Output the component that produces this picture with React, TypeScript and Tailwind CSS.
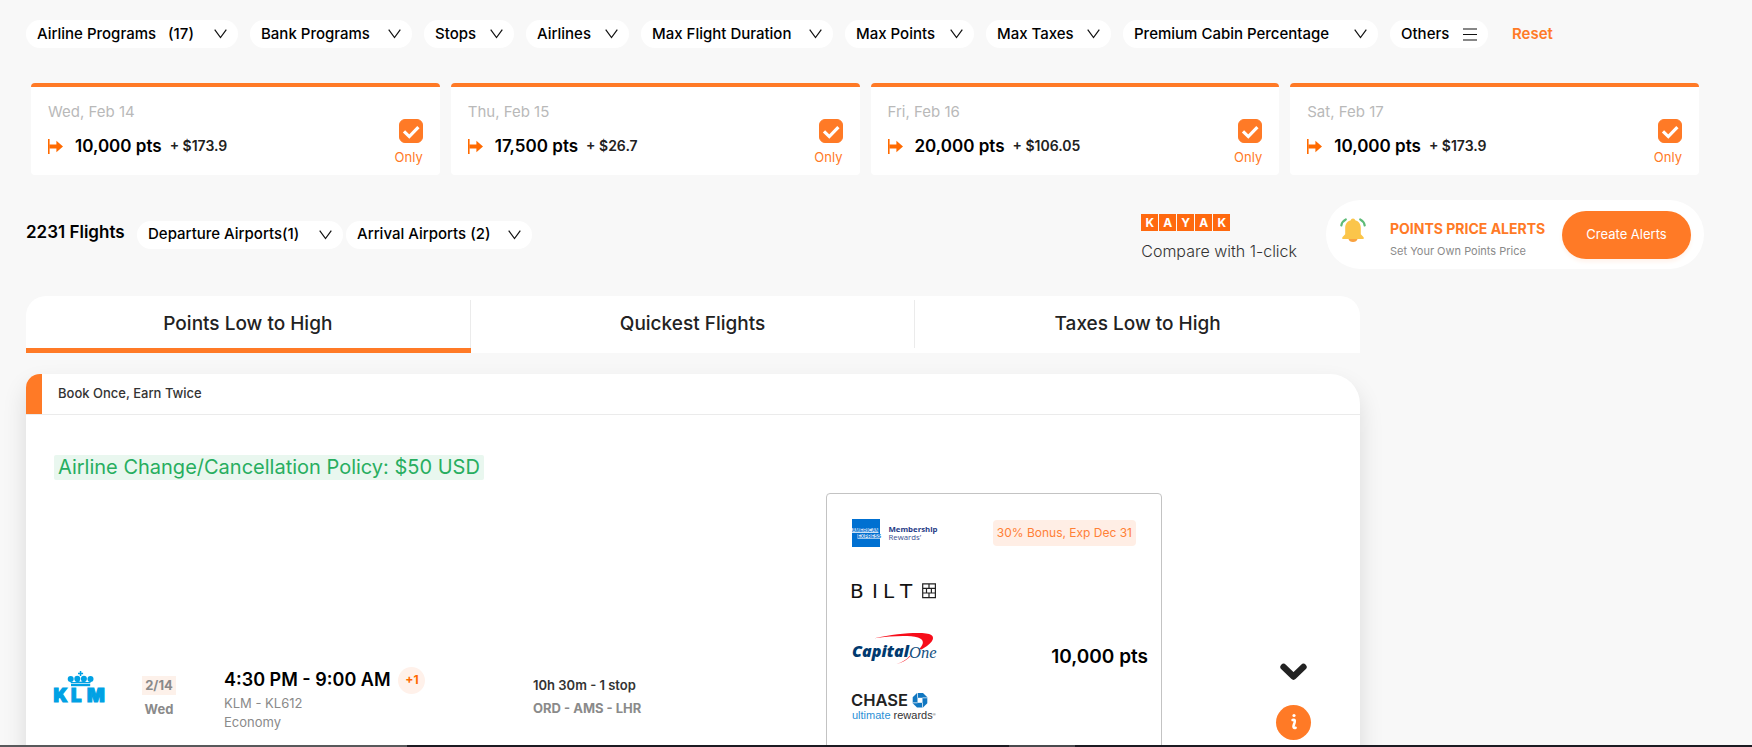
import React, { useState } from 'react';

const FILTERS = [
  { label: 'Airline Programs', count: '(17)', width: 'min-w-[212px]' },
  { label: 'Bank Programs', width: 'min-w-[162px]' },
  { label: 'Stops', width: 'min-w-[90px]' },
  { label: 'Airlines', width: 'min-w-[103px]' },
  { label: 'Max Flight Duration', width: 'min-w-[192px]' },
  { label: 'Max Points', width: 'min-w-[129px]' },
  { label: 'Max Taxes', width: 'min-w-[125px]' },
  { label: 'Premium Cabin Percentage', width: 'min-w-[255px]' },
];

const DAYS = [
  { date: 'Wed, Feb 14', points: '10,000 pts', tax: '+ $173.9' },
  { date: 'Thu, Feb 15', points: '17,500 pts', tax: '+ $26.7' },
  { date: 'Fri, Feb 16', points: '20,000 pts', tax: '+ $106.05' },
  { date: 'Sat, Feb 17', points: '10,000 pts', tax: '+ $173.9' },
];

const TABS = ['Points Low to High', 'Quickest Flights', 'Taxes Low to High'];

const ChevronIcon = () => (
  <svg className="shrink-0" width="13" height="10" viewBox="0 0 13 10" fill="none" stroke="#111" strokeWidth="1.2" aria-hidden="true">
    <path d="M0.7 0.6 6.5 8.6 12.3 0.6" />
  </svg>
);

interface PillProps {
  label: string;
  count?: string;
  width: string;
  icon?: React.ReactNode;
}

const Pill: React.FC<PillProps> = ({ label, count, width, icon }) => (
  <button
    type="button"
    className={`flex h-7 items-center justify-between rounded-full bg-white px-[11px] text-[15px] font-medium whitespace-nowrap text-black ${width}`}
  >
    <span className="flex gap-3">
      <span>{label}</span>
      {count && <span>{count}</span>}
    </span>
    {icon ?? <ChevronIcon />}
  </button>
);

const DepartIcon = () => (
  <svg width="15" height="15" viewBox="0 0 15 15" fill="#ff6a00" aria-hidden="true">
    <path d="M0 0h1.6v15H0z" />
    <path d="M1.4 5.6h7V1.800L15 7.500l-6.600 5.700V9.400h-7z" />
  </svg>
);

interface DayCardProps {
  date: string;
  points: string;
  tax: string;
}

const DayCard: React.FC<DayCardProps> = ({ date, points, tax }) => (
  <div className="flex h-[92px] items-center justify-between rounded border-t-4 border-[#ff7a26] bg-white px-[17px]">
    <div className="mb-1">
      <p className="text-[15px] leading-6 text-[#b9b9b9]">{date}</p>
      <div className="mt-2.5 flex items-center leading-6">
        <DepartIcon />
        <span className="ml-3 text-[17px] font-semibold text-black">{points}</span>
        <span className="ml-2 text-sm font-semibold text-[#222]">{tax}</span>
      </div>
    </div>
    <div className="mt-6 flex flex-col items-end">
      <label className="relative block size-6">
        <input type="checkbox" defaultChecked aria-label={date} className="peer block size-6 appearance-none rounded-md border border-[#ff7a26] checked:bg-[#ff7a26]" />
        <svg className="pointer-events-none absolute inset-0 hidden peer-checked:block" width="24" height="24" viewBox="0 0 24 24" fill="none" stroke="#fff" strokeWidth="3.2" aria-hidden="true">
          <path d="M5 12.4 10.3 17.6 19.4 8.2" />
        </svg>
      </label>
      <button type="button" className="mt-1 text-[13px] leading-5 text-[#ff7a26]">Only</button>
    </div>
  </div>
);

const BellIcon = () => (
  <svg width="26" height="26" viewBox="0 0 26 26" aria-hidden="true">
    <path d="M8.5 21h9a4.6 3.8 0 0 1-9 0z" fill="#f9a13f" />
    <path d="M13 0.5c1.4 0 2 .9 2.2 1.8 3.600 .9 5.600 3.700 5.600 7.600v6.300l2.600 2.700c.8 .9 .4 2.100-.7 2.100H3.300c-1.100 0-1.500-1.200-.7-2.100l2.600-2.700V9.900c0-3.900 2-6.700 5.600-7.600C11 1.400 11.600.5 13 .5z" fill="#fbc54a" />
    <path d="M5.800 1.500C3.300 2.700 1.800 4.700 1.300 7.500M20.200 1.500c2.500 1.200 4 3.200 4.500 6" fill="none" stroke="#5dbb77" strokeWidth="2.200" strokeLinecap="round" />
  </svg>
);

const KlmLogo = () => (
  <svg className="overflow-visible" width="54" height="32" viewBox="0 0 54 32" fill="#00a1e4" role="img" aria-label="KLM">
    <path d="M25.8 0h1.500v1.800h1.800v1.500h-1.800V5h-1.500V3.300H24V1.800h1.800z" />
    <circle cx="16.700" cy="8" r="3" />
    <circle cx="23.300" cy="7.800" r="3" />
    <circle cx="29.900" cy="7.800" r="3" />
    <circle cx="36.500" cy="8" r="3" />
    <path d="M16 9.500c2 2 5 2 7.300 0 2 1.500 4.500 1.500 6.600 0 2.300 2 5.300 2 7.300 0l-.9 2.800H16.900z" />
    <path d="M17 12.900h19.200v2.300H17z" />
    <g fontFamily="Inter" fontWeight="900" fontSize="18.500" stroke="#00a1e4" strokeWidth="1.200">
      <text x="-.5" y="31">K</text>
      <text x="17" y="31">L</text>
      <text x="33" y="31">M</text>
    </g>
  </svg>
);

const AmexLogo = () => (
  <svg className="overflow-visible" width="85" height="28" viewBox="0 0 85 28" role="img" aria-label="American Express Membership Rewards">
    <path d="M0 0h28v28H0z" fill="#0070d1" />
    <path d="M0 9.200h26.500v4.800H0zM5.500 15h22.500v4.800H5.500z" fill="#fff" fillOpacity=".8" />
    <g fontFamily="Liberation Sans" fontWeight="700" fontSize="5" fill="#0070d1">
      <text x="0" y="13.400">AMERICAN</text>
      <text x="5.500" y="19.200">EXPRESS</text>
    </g>
    <text x="36.500" y="12.500" fontFamily="Open Sans" fontWeight="700" fontSize="7.800" fill="#1f3a86">Membership</text>
    <text x="36.500" y="20.500" fontFamily="Open Sans" fontSize="7.800" fill="#3a4f92">Rewards’</text>
  </svg>
);

const BiltLogo = () => (
  <svg className="overflow-visible" width="85" height="16" viewBox="0 0 85 16" role="img" aria-label="Bilt">
    <g fontFamily="DejaVu Sans" fontSize="20" fill="#111">
      <text x="-2" y="15">B</text>
      <text x="20" y="15">I</text>
      <text x="31" y="15">L</text>
      <text x="48" y="15">T</text>
    </g>
    <path d="M70.700 .8h12.700v13.800H70.700zM70.700 5.400h12.700M70.700 10h12.700M77 .8v4.600M74.500 5.400V10M79.400 5.400V10M77 10v4.600" fill="none" stroke="#222" strokeWidth="1.200" />
  </svg>
);

const CapitalOneLogo = () => (
  <svg className="overflow-visible" width="85" height="32" viewBox="0 0 85 32" role="img" aria-label="Capital One">
    <path d="M22.500 5.200C42 1 62 -.8 74 .4c9.500 1 9 6.500 1 12.600l-5.500 3.400-2-.7C72 11 72.500 6.600 66 4.400 56 2 40 3 22.500 5.200z" fill="#f70d1a" />
    <path d="M57.500 23C55 26.500 50.500 29 44.500 31c6-1.300 10.500-4 14-8z" fill="#f70d1a" />
    <text x="0" y="23.700" fontFamily="Open Sans" fontWeight="800" fontStyle="italic" fontSize="16" fill="#003a6f">Capital</text>
    <text x="57" y="25" fontFamily="Liberation Serif" fontStyle="italic" fontSize="16.500" fill="#14507f">One</text>
  </svg>
);

const ChaseLogo = () => (
  <svg className="overflow-visible" width="85" height="28" viewBox="0 0 85 28" role="img" aria-label="Chase Ultimate Rewards">
    <text x="-1" y="13.300" fontFamily="Inter" fontWeight="600" fontSize="16.500" fill="#222">CHASE</text>
    <path d="M65 0h6l4.300 4.300v6L71 14.600h-6L60.700 10.300v-6z" fill="#1177c1" />
    <path d="M65.500 4.800h5v5h-5z" fill="#fff" />
    <path d="M65.500 0v4.800M75.300 4.800H70.500M70.500 14.600V9.800M60.700 9.800H65.500" stroke="#fff" strokeWidth=".7" />
    <text x="0" y="25.500" fontFamily="Liberation Sans" fontSize="11">
      <tspan fill="#2a8fd6">ultimate</tspan>
      <tspan fill="#333"> rewards</tspan>
      <tspan fill="#333" fontSize="4" dy="-3">®</tspan>
    </text>
  </svg>
);

const KayakLogo = () => (
  <div className="flex gap-px" role="img" aria-label="Kayak">
    {['K', 'A', 'Y', 'A', 'K'].map((letter, i) => (
      <span key={i} className="flex h-[17px] w-[17px] items-center justify-center bg-[#ff690f] text-xs font-bold text-white">
        {letter}
      </span>
    ))}
  </div>
);

const FlightCard = () => (
  <article className="mt-[21px] rounded-tl-[14px] rounded-tr-[30px] bg-white shadow-[0_12px_24px_rgba(0,0,0,0.12)]">
    <header className="flex h-[41px] items-center overflow-hidden rounded-tl-[14px] border-b border-[#ebebeb]">
      <span className="h-full w-4 shrink-0 bg-[#ff7a26]" />
      <p className="ml-4 text-[13px] font-medium text-[#333]">Book Once, Earn Twice</p>
    </header>
    <div className="flex pt-10 pl-7">
      <p className="rounded-xs bg-[#e9f7ef] px-1 text-xl leading-[25px] text-[#27ae60]">
        Airline Change/Cancellation Policy: $50 USD
      </p>
    </div>
    <div className="mt-[13px] grid grid-cols-[88fr_82fr_309fr_293fr_336fr_198fr] items-center pl-7">
      <KlmLogo />
      <div className="mt-5 flex w-[34px] flex-col items-center text-[13px] font-bold text-[#8a8a8a]">
        <span className="w-full bg-[#fdf1ea] text-center leading-[19px]">2/14</span>
        <span className="mt-1 leading-5">Wed</span>
      </div>
      <div className="mt-6">
        <div className="flex items-center gap-2">
          <span className="text-lg font-semibold text-black">4:30 PM - 9:00 AM</span>
          <span className="flex size-[27px] items-center justify-center rounded-full bg-[#fff1ea] text-xs font-bold text-[#ff6a00]">+1</span>
        </div>
        <p className="text-[13px] leading-[19px] text-[#8a8a8a]">KLM - KL612</p>
        <p className="text-[13px] leading-[19px] text-[#8a8a8a]">Economy</p>
      </div>
      <div className="mt-5 text-[13px] leading-[23px] font-semibold">
        <p className="text-[#333]">10h 30m - 1 stop</p>
        <p className="font-bold text-[#8a8a8a]">ORD - AMS - LHR</p>
      </div>
      <div className="min-h-[388px] rounded border border-[#c3c3c3] px-[25px] pt-[10px]">
        <div className="flex h-[58px] items-center justify-between">
          <AmexLogo />
          <span className="rounded bg-[#ffeee5] px-1 text-xs leading-[26px] text-[#ff8036]">30% Bonus, Exp Dec 31</span>
        </div>
        <div className="flex h-[58px] items-center"><BiltLogo /></div>
        <div className="flex h-[58px] items-center justify-between">
          <CapitalOneLogo />
          <span className="-mr-3 mt-4 text-[19px] font-semibold text-black">10,000 pts</span>
        </div>
        <div className="flex h-[58px] items-center"><ChaseLogo /></div>
      </div>
      <div className="mt-7 mr-[49px] flex w-[35px] flex-col items-center justify-self-end">
        <button type="button" aria-label="Show details">
          <svg width="27" height="18" viewBox="0 0 27 18" fill="none" stroke="#222" strokeWidth="6.500" strokeLinecap="round" strokeLinejoin="round" aria-hidden="true">
            <path d="M3.600 4 13.500 13.500 23.400 4" />
          </svg>
        </button>
        <button type="button" aria-label="Flight info" className="mt-6 flex size-[35px] items-center justify-center rounded-full bg-[#ff7a26]">
          <svg width="8" height="18" viewBox="0 0 8 18" fill="none" stroke="#fff" strokeLinecap="round" aria-hidden="true">
            <circle cx="4" cy="2.500" r="1.600" fill="#fff" stroke="none" />
            <path d="M2.600 7c2-.8 2.600 .2 2 2.300l-1 3.200c-.6 2.200 .4 2.900 2 2.300" strokeWidth="2.600" />
          </svg>
        </button>
      </div>
    </div>
  </article>
);

const App = () => {
  const [activeTab, setActiveTab] = useState(TABS[0]);

  return (
    <div className="flex h-screen flex-col overflow-hidden bg-[#f8f8f8] font-[Inter,sans-serif]">
      <main className="min-h-0 flex-1 overflow-hidden pt-5 pr-12 pl-[26px]">
        {/* Filters */}
        <div className="flex items-center gap-3">
          {FILTERS.map((filter) => (
            <Pill key={filter.label} {...filter} />
          ))}
          <Pill
            label="Others"
            width="min-w-[98px]"
            icon={
              <svg width="14" height="13" viewBox="0 0 14 13" stroke="#111" strokeWidth="1.200" aria-hidden="true">
                <path d="M0 1h14M0 6.500h14M0 12h14" />
              </svg>
            }
          />
          <button type="button" className="ml-3 text-[15px] font-semibold text-[#ff7a26]">Reset</button>
        </div>

        {/* Days */}
        <div className="mx-[5px] mt-[35px] grid grid-cols-4 gap-[11px]">
          {DAYS.map((day) => (
            <DayCard key={day.date} {...day} />
          ))}
        </div>

        {/* Result count, airports and alerts */}
        <div className="mt-[25px] flex items-center">
          <h1 className="min-w-[111px] pb-1 text-[17px] font-semibold text-black">2231 Flights</h1>
          <div className="flex gap-[3px]">
            <Pill label="Departure Airports(1)" width="min-w-[206px]" />
            <Pill label="Arrival Airports (2)" width="min-w-[186px]" />
          </div>
          <div className="ml-auto flex items-center">
            <a href="#kayak" className="mt-2 mr-[29px] text-[#333]">
              <KayakLogo />
              <span className="mt-2 block text-base leading-6 font-light">Compare with 1-click</span>
            </a>
            <div className="flex h-[69px] min-w-[378px] items-center rounded-full bg-white pr-[13px] pl-[14px]">
              <div className="mb-2"><BellIcon /></div>
              <div className="mt-2 ml-6">
                <p className="text-sm leading-6 font-bold text-[#ff7a26]">POINTS PRICE ALERTS</p>
                <p className="text-[11px] leading-5 text-[#8a8a8a]">Set Your Own Points Price</p>
              </div>
              <button type="button" className="ml-auto h-12 w-[129px] rounded-full bg-[#ff7a26] text-[13px] text-white shadow-[0_3px_4px_#fff3ec]">
                Create Alerts
              </button>
            </div>
          </div>
        </div>

        {/* Results */}
        <section className="mt-[27px] w-[79.5%]">
          <div role="tablist" className="grid grid-cols-3 overflow-hidden rounded-t-[20px] bg-white">
            {TABS.map((tab, i) => (
              <button
                key={tab}
                type="button"
                role="tab"
                aria-selected={tab === activeTab}
                onClick={() => setActiveTab(tab)}
                className={`border-b-[5px] pt-1 text-[19px] font-medium text-[#222] ${tab === activeTab ? 'border-[#ff7a26]' : 'border-transparent'}`}
              >
                <span className={`flex h-12 items-center justify-center ${i < 2 ? 'border-r border-[#ebebeb]' : ''}`}>{tab}</span>
              </button>
            ))}
          </div>
          <FlightCard />
        </section>
      </main>
      <footer className="flex h-[2px] shrink-0 bg-[#1c1b22]">
        <span className="w-[407px] bg-[#58595b]" />
        <span className="ml-[602px] w-[66px] bg-[#4a4a4e]" />
      </footer>
    </div>
  );
};

export default App;
